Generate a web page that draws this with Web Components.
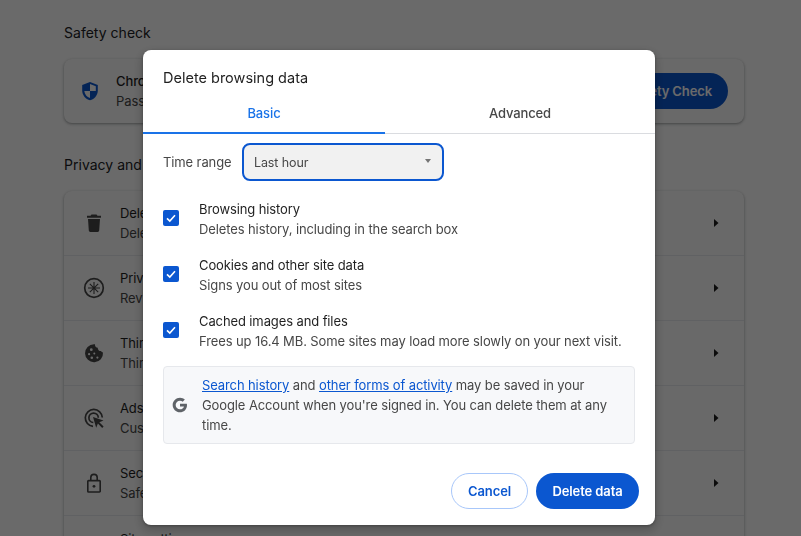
<!DOCTYPE html>
<html><head><meta charset="utf-8"><title>Delete browsing data</title>
<style>
html,body{margin:0;height:100%;overflow:hidden;background:#fff}
body{font-family:Inter,"Liberation Sans",sans-serif;font-size:13px;color:#1f1f1f;letter-spacing:-.11px}
</style></head><body>
<settings-page>
  <section-title>Safety check</section-title>
  <settings-card>
    <safety-row title-text="Chrome can help keep you safe from data breaches" sub-text="Password Manager and extensions checked"></safety-row>
  </settings-card>
  <section-title>Privacy and security</section-title>
  <settings-card>
    <nav-row icon="trash" title-text="Delete browsing data" sub-text="Delete history, cookies, cache, and more"></nav-row>
    <nav-row icon="guide" title-text="Privacy Guide" sub-text="Review key privacy and security controls"></nav-row>
    <nav-row icon="cookie" title-text="Third-party cookies" sub-text="Third-party cookies are blocked in Incognito mode"></nav-row>
    <nav-row icon="ads" title-text="Ads privacy" sub-text="Customize the info used by sites to show you ads"></nav-row>
    <nav-row icon="lock" title-text="Security" sub-text="Safe Browsing and other security settings"></nav-row>
    <nav-row icon="none" title-text="Site settings" sub-text="Controls what information sites can use and show"></nav-row>
  </settings-card>
</settings-page>
<modal-scrim></modal-scrim>
<delete-dialog>
  <check-row title-text="Browsing history" sub-text="Deletes history, including in the search box"></check-row>
  <check-row title-text="Cookies and other site data" sub-text="Signs you out of most sites"></check-row>
  <check-row title-text="Cached images and files" sub-text="Frees up 16.4 MB. Some sites may load more slowly on your next visit."></check-row>
</delete-dialog>
<script>
const ICONS={
 trash:'<path fill="currentColor" d="M9.500 3.500h5l1 1.200h3.500v2H5v-2h3.500zM6 8h12l-.8 11.500a1.500 1.500 0 0 1-1.500 1.400H8.300a1.500 1.500 0 0 1-1.500-1.400z"/>',
 guide:'<circle cx="12" cy="12" r="9.300" fill="none" stroke="currentColor" stroke-width="1.700"/><path fill="none" stroke="currentColor" stroke-width="1.100" d="M12 6v12M6 12h12M7.800 7.800l8.400 8.400M16.200 7.800l-8.400 8.400"/>',
 cookie:'<path fill="currentColor" fill-rule="evenodd" d="M12 3.200c.3 0 .7 0 1 .1a2.900 2.900 0 0 0 2.800 3.400 2.900 2.900 0 0 0 3.200 3.300 2.500 2.500 0 0 0 2 1.500A9 9 0 1 1 12 3.200zM9.300 7.300a1.400 1.400 0 1 0 0 2.800 1.400 1.400 0 0 0 0-2.800zm-2.200 4.800a1.100 1.100 0 1 0 0 2.200 1.100 1.100 0 0 0 0-2.200zm5.200-.6a1 1 0 1 0 0 2 1 1 0 0 0 0-2zm-2.500 3.900a1.300 1.300 0 1 0 0 2.600 1.300 1.300 0 0 0 0-2.600zm5.600.1a1.100 1.100 0 1 0 0 2.200 1.100 1.100 0 0 0 0-2.200z"/>',
 ads:'<path fill="none" stroke="currentColor" stroke-width="1.700" d="M11 20.400A8.500 8.500 0 1 1 20.300 11.500M11.300 16.500a4.700 4.700 0 1 1 5-4.800"/><path fill="currentColor" d="M11 11l10.500 3.500-4.200 1.700 4.300 4.300-1.400 1.400-4.300-4.300-1.700 4.200z"/>',
 lock:'<path fill="none" stroke="currentColor" stroke-width="1.600" d="M6.600 9.600h10.800a.8.800 0 0 1 .8.800v9.800a.8.800 0 0 1-.8.800H6.600a.8.800 0 0 1-.8-.8v-9.800a.8.800 0 0 1 .8-.8zM8.800 9.400V6.600a3.200 3.200 0 0 1 6.400 0v2.800"/><circle cx="12" cy="15.300" r="1.400" fill="currentColor"/>',
 none:''
};
function def(name,css,html){
  customElements.define(name,class extends HTMLElement{
    constructor(){super();this.attachShadow({mode:'open'});}
    connectedCallback(){
      const a=n=>this.getAttribute(n)||'';
      this.shadowRoot.innerHTML='<style>'+css+'</style>'+(typeof html==='function'?html(a):html);
    }
  });
}
def('settings-page',':host{display:flex;flex-direction:column;width:680px;padding:0 0 0 64px}','<slot></slot>');
def('section-title',':host{display:block;height:68px;box-sizing:border-box;padding-top:33px;line-height:18px;font-size:14px;letter-spacing:.02px;color:#202124}:host(:first-child){height:59px;padding-top:24px}','<slot></slot>');
def('settings-card',':host{display:block;background:#fcfcfc;border-radius:8px;box-shadow:0 1px 2px rgba(60,64,67,.3),0 1px 3px 1px rgba(60,64,67,.15);min-height:64px}','<slot></slot>');
def('safety-row',`:host{display:flex;align-items:center;height:64px;box-sizing:border-box;padding:0 16px 0 14px}
svg{width:24px;height:24px;flex:none}
.t{margin-left:14px;flex:1;white-space:nowrap;overflow:hidden;line-height:20px}
.a{font-weight:500;color:#1f1f1f}.b{color:#474747}
button{all:unset;flex:none;background:#0b57d0;color:#fff;font-weight:600;height:36px;line-height:36px;padding:0 16px;border-radius:18px;font-size:13px}`,
a=>`<svg viewBox="0 0 24 24"><path fill="#0b57d0" d="M12 3 4.200 6v5.500c0 4.600 3.300 8.700 7.800 9.700 4.500-1 7.800-5.100 7.800-9.700V6z"/><path fill="#fff" d="M12 5v7h5.800V7.300zM12 12H6.300c.3 3.300 2.600 6.200 5.700 7.100z"/></svg>
<div class="t"><div class="a">${a('title-text')}</div><div class="b">${a('sub-text')}</div></div><button>Safety Check</button>`);
def('nav-row',`:host{display:flex;align-items:center;height:65px;box-sizing:border-box;padding:0 24px 0 18px;border-bottom:1px solid #e8eaed;color:#1f1f1f}
:host(:last-child){border-bottom:0}
svg.i{width:24px;height:24px;flex:none;color:#474747}
.t{margin-left:14px;flex:1;white-space:nowrap;overflow:hidden;line-height:20px}
.b{color:#474747}
svg.c{width:10px;height:10px;flex:none;color:#1f1f1f;margin-left:-1px;margin-right:-1px}`,
a=>`<svg class="i" viewBox="0 0 24 24">${ICONS[a('icon')]||''}</svg>
<div class="t"><div class="a">${a('title-text')}</div><div class="b">${a('sub-text')}</div></div>
<svg class="c" viewBox="0 0 10 10"><path fill="currentColor" d="M3 1l4.500 4L3 9z"/></svg>`);
def('modal-scrim',':host{position:fixed;inset:0;background:rgba(0,0,0,.585)}','');
def('check-row',`:host{display:flex;align-items:center;height:56px;color:#1f1f1f}
.box{width:16px;height:16px;border-radius:2px;background:#0b57d0;flex:none;display:flex;align-items:center;justify-content:center}
.box svg{width:12px;height:12px}
.t{margin-left:20px;padding-top:2px;line-height:20px;white-space:nowrap}.b{color:#474747}`,
a=>`<span class="box"><svg viewBox="0 0 12 12"><path fill="none" stroke="#fff" stroke-width="1.600" d="M2 6.300 4.800 9 10 3.200"/></svg></span><div class="t"><div>${a('title-text')}</div><div class="b">${a('sub-text')}</div></div>`);
def('delete-dialog',`:host{position:fixed;left:143px;top:50px;width:512px;height:475px;background:#fff;border-radius:8px;box-shadow:0 4px 8px 3px rgba(0,0,0,.15),0 1px 3px rgba(0,0,0,.3);display:flex;flex-direction:column}
h2{margin:0;padding:18px 20px 0;box-sizing:content-box;font-size:14.500px;font-weight:400;line-height:19px;color:#1f1f1f;height:27px;letter-spacing:0}
.tabs{display:flex;height:38px;border-bottom:1px solid #dadce0}
.tab{display:flex;align-items:center;justify-content:center;font-weight:500;color:#474747;position:relative;box-sizing:border-box;height:38px;padding-bottom:2px}
.tab.on{flex:0 0 242px;color:#1a73e8}.tab.off{flex:1}
.tab.on::after{content:"";position:absolute;left:0;right:0;bottom:-1px;height:2px;background:#1a73e8}
.body{padding:0 20px;flex:1;display:flex;flex-direction:column}
.range{display:flex;align-items:center;margin-top:9px;height:38px}
.range label{color:#474747;width:79px;flex:none}
.sel{box-sizing:border-box;width:202px;height:38px;border:2px solid #0b57d0;border-radius:8px;background:#f1f1f1;display:flex;align-items:center;justify-content:space-between;padding:0 11px 0 10px;color:#474747;font-size:12.500px}
.sel i{display:block;width:0;height:0;border-left:3.500px solid transparent;border-right:3.500px solid transparent;border-top:4px solid #757575;margin-top:-2px}
.rows{margin-top:9px;display:flex;flex-direction:column}
.info{box-sizing:border-box;display:flex;align-items:center;height:78px;margin-top:8px;background:#f7f8fa;border:1px solid #e6e8ec;border-radius:4px;padding:0 8px;line-height:20px;color:#474747}
.info svg{width:16px;height:16px;flex:none}
.info p{margin:0 0 0 14px}
a{color:#0b57d0;text-decoration:underline}
.foot{display:flex;justify-content:flex-end;gap:8px;padding:0 16px 16px 0;margin-top:auto}
button{all:unset;box-sizing:border-box;height:36px;border-radius:18px;font-weight:600;display:flex;align-items:center;justify-content:center}
.c{width:77px;border:1px solid #a8c7fa;color:#0b57d0;background:#fff}
.d{width:103px;background:#0b57d0;color:#fff}`,
`<h2>Delete browsing data</h2>
<div class="tabs"><div class="tab on">Basic</div><div class="tab off">Advanced</div></div>
<div class="body">
<div class="range"><label>Time range</label><div class="sel"><span>Last hour</span><i></i></div></div>
<div class="rows"><slot></slot></div>
<div class="info"><svg viewBox="0 0 48 48"><path fill="#5f6368" d="M44.500 20H24v8.500h11.800C34.700 33.900 30.100 37 24 37c-7.200 0-13-5.800-13-13s5.800-13 13-13c3.100 0 5.900 1.100 8.100 2.900l6.400-6.400C34.600 4.100 29.600 2 24 2 11.800 2 2 11.800 2 24s9.800 22 22 22c11 0 21-8 21-22 0-1.300-.2-2.700-.5-4z"/></svg>
<p><a>Search history</a> and <a>other forms of activity</a> may be saved in your Google Account when you're signed in. You can delete them at any time.</p></div>
</div>
<div class="foot"><button class="c">Cancel</button><button class="d">Delete data</button></div>`);
</script>
</body></html>
